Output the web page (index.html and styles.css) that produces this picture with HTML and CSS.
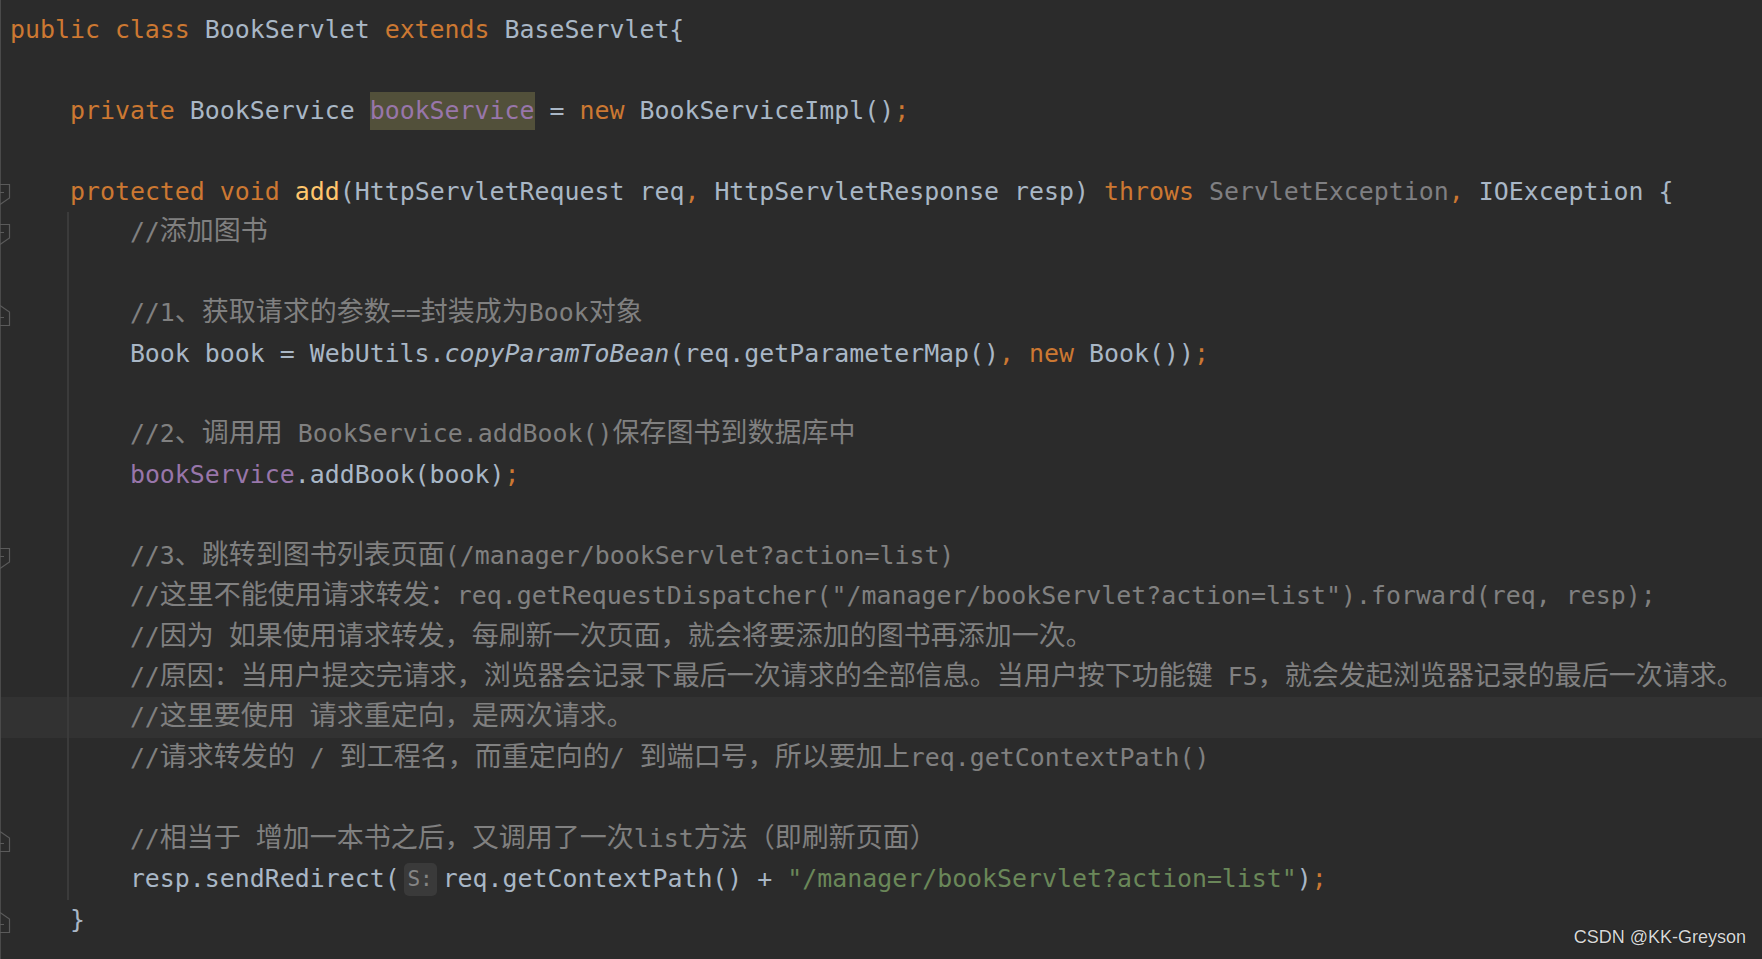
FILE: index.html
```html
<!DOCTYPE html>
<html lang="zh">
<head>
<meta charset="utf-8">
<title>BookServlet.java</title>
<link rel="stylesheet" href="styles.css">
</head>
<body>
<div class="editor">
  <div class="ln"><span class="g"></span><span class="c"><span class="k">public class</span> BookServlet <span class="k">extends</span> BaseServlet{</span></div>
  <div class="ln"><span class="g"></span><span class="c"></span></div>
  <div class="ln"><span class="g"></span><span class="c">    <span class="k">private</span> BookService <span class="f hl">bookService</span> = <span class="k">new</span> BookServiceImpl()<span class="k">;</span></span></div>
  <div class="ln"><span class="g"></span><span class="c"></span></div>
  <div class="ln"><span class="g"><svg class="fold" viewBox="0 0 11 21" width="11" height="21"><path d="M0 .5H9.5V14L0 20.5M0 8.5H4"/></svg></span><span class="c">    <span class="k">protected void</span> <span class="m">add</span>(HttpServletRequest req<span class="k">,</span> HttpServletResponse resp) <span class="k">throws</span> <span class="x">ServletException</span><span class="k">,</span> IOException {</span></div>
  <div class="blk">
    <div class="ln"><span class="g"><svg class="fold" viewBox="0 0 11 21" width="11" height="21"><path d="M0 .5H9.5V14L0 20.5M0 8.5H4"/></svg></span><span class="c cm">        //<span class="z">添加图书</span></span></div>
    <div class="ln"><span class="g"></span><span class="c"></span></div>
    <div class="ln"><span class="g"><svg class="fold" viewBox="0 0 11 21" width="11" height="21"><path d="M0 .5L9.5 7V20.5H0M0 12.5H4"/></svg></span><span class="c cm">        //1<span class="z">、获取请求的参数</span>==<span class="z">封装成为</span>Book<span class="z">对象</span></span></div>
    <div class="ln"><span class="g"></span><span class="c">        Book book = WebUtils.<span class="it">copyParamToBean</span>(req.getParameterMap()<span class="k">,</span> <span class="k">new</span> Book())<span class="k">;</span></span></div>
    <div class="ln"><span class="g"></span><span class="c"></span></div>
    <div class="ln"><span class="g"></span><span class="c cm">        //2<span class="z">、调用用</span> BookService.addBook()<span class="z">保存图书到数据库中</span></span></div>
    <div class="ln"><span class="g"></span><span class="c">        <span class="f">bookService</span>.addBook(book)<span class="k">;</span></span></div>
    <div class="ln"><span class="g"></span><span class="c"></span></div>
    <div class="ln"><span class="g"><svg class="fold" viewBox="0 0 11 21" width="11" height="21"><path d="M0 .5H9.5V14L0 20.5M0 8.5H4"/></svg></span><span class="c cm">        //3<span class="z">、跳转到图书列表页面</span>(/manager/bookServlet?action=list)</span></div>
    <div class="ln"><span class="g"></span><span class="c cm">        //<span class="z">这里不能使用请求转发：</span>req.getRequestDispatcher("/manager/bookServlet?action=list").forward(req, resp);</span></div>
    <div class="ln"><span class="g"></span><span class="c cm">        //<span class="z">因为</span> <span class="z">如果使用请求转发，每刷新一次页面，就会将要添加的图书再添加一次。</span></span></div>
    <div class="ln"><span class="g"></span><span class="c cm">        //<span class="z">原因：当用户提交完请求，浏览器会记录下最后一次请求的全部信息。当用户按下功能键</span> F5<span class="z">，就会发起浏览器记录的最后一次请求。</span></span></div>
    <div class="ln cur"><span class="g"></span><span class="c cm">        //<span class="z">这里要使用</span> <span class="z">请求重定向，是两次请求。</span></span></div>
    <div class="ln"><span class="g"></span><span class="c cm">        //<span class="z">请求转发的</span> / <span class="z">到工程名，而重定向的</span>/ <span class="z">到端口号，所以要加上</span>req.getContextPath()</span></div>
    <div class="ln"><span class="g"></span><span class="c"></span></div>
    <div class="ln"><span class="g"><svg class="fold" viewBox="0 0 11 21" width="11" height="21"><path d="M0 .5L9.5 7V20.5H0M0 12.5H4"/></svg></span><span class="c cm">        //<span class="z">相当于</span> <span class="z">增加一本书之后，又调用了一次</span>list<span class="z">方法（即刷新页面）</span></span></div>
    <div class="ln"><span class="g"></span><span class="c">        resp.sendRedirect(<span class="hint">S:</span>req.getContextPath() + <span class="s">"/manager/bookServlet?action=list"</span>)<span class="k">;</span></span></div>
  </div>
  <div class="ln"><span class="g"><svg class="fold" viewBox="0 0 11 21" width="11" height="21"><path d="M0 .5L9.5 7V20.5H0M0 12.5H4"/></svg></span><span class="c">    }</span></div>
</div>
<div class="mark">CSDN @KK-Greyson</div>
</body>
</html>
```

FILE: styles.css
```css
html, body {
  margin: 0;
  height: 100%;
  background: #2b2b2b;
  overflow: hidden;
}

body {
  position: relative;
  font-family: "DejaVu Sans Mono", "Noto Sans CJK SC", monospace;
  font-size: 24.9px;
  color: #a9b7c6;
}

.editor {
  padding-top: 10px;
  border-left: 1px solid #4a4a4a;
  min-height: 100%;
  box-sizing: border-box;
}

.ln {
  display: flex;
  height: 40.45px;
  line-height: 40.45px;
  white-space: pre;
}

.g {
  flex: none;
  width: 9px;
}

.fold {
  display: block;
  margin-top: 12px;
  margin-left: -1px;
  fill: none;
  stroke: #5a5a5a;
  stroke-width: 1.2;
}

.c {
  flex: 1;
}

.cur {
  background: #323232;
}

.blk {
  position: relative;
}

.blk::before {
  content: "";
  position: absolute;
  left: 66px;
  top: 0;
  bottom: 0;
  width: 1.5px;
  background: #3b3b3b;
}

.k { color: #cc7832; }
.m { color: #ffc66d; }
.f { color: #9876aa; }
.s { color: #6a8759; }
.cm { color: #808080; }
.x { color: #7f7f82; }
.it { font-style: italic; }

.z {
  font-family: "Noto Sans CJK SC", sans-serif;
  font-size: 27px;
  line-height: 1;
}

.hl {
  display: inline-block;
  line-height: 38px;
  background: #52503a;
}

.hint {
  display: inline-block;
  vertical-align: top;
  width: 33px;
  height: 33px;
  margin: 3.5px 6px 0 4px;
  border-radius: 5px;
  background: #3a3a3a;
  color: #858585;
  font-size: 21px;
  line-height: 33px;
  text-align: center;
}

.mark {
  position: absolute;
  right: 16px;
  bottom: 11px;
  font-family: "Liberation Sans", Arial, sans-serif;
  font-size: 18px;
  color: #d8d8d8;
  text-shadow: 0 0 1px #000;
}
```
